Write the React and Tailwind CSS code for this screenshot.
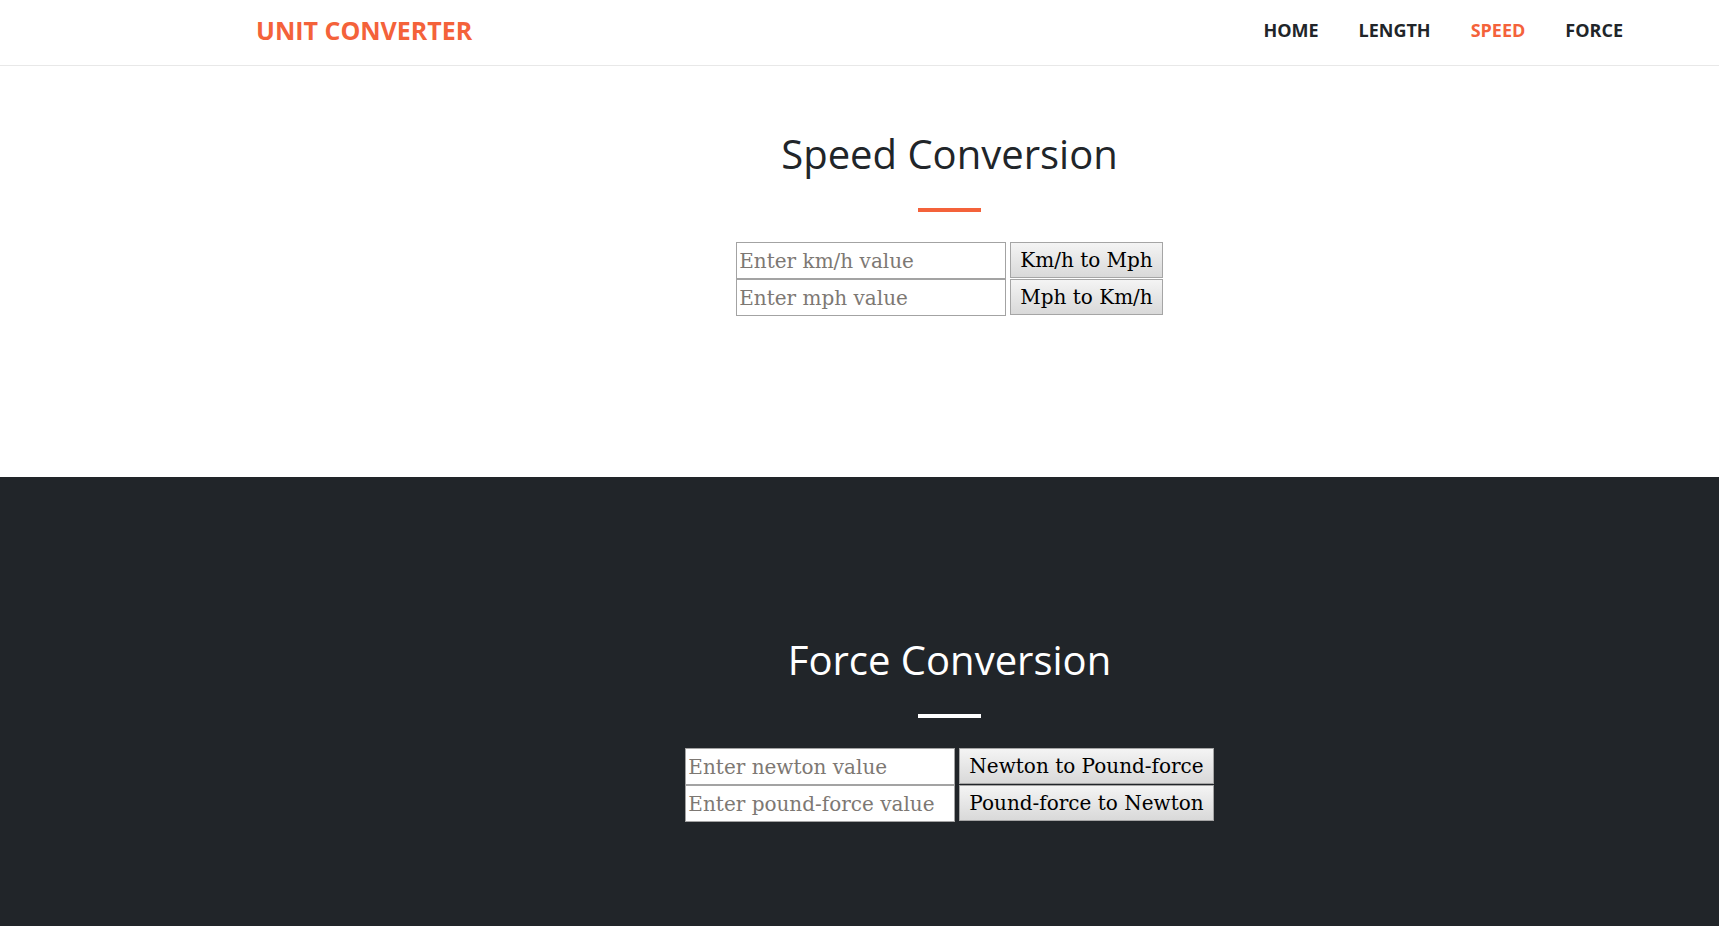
import { useState } from 'react';

function Converter({ rows }) {
    const [values, setValues] = useState(rows.map(() => ''));

    function handleChange(i, v) {
        setValues(prev => prev.map((p, j) => (j == i ? v : p)));
    }

    return <div className="flex flex-col">
        {rows.map((row, i) => (
            <div key={row.button} className="flex flex-row items-start gap-[4px]">
                <input
                    type="text"
                    value={values[i]}
                    onChange={e => handleChange(i, e.target.value)}
                    placeholder={row.placeholder}
                    className="w-[270px] h-[37px] bg-white border border-[#a3a3a3] px-[2px] text-[20px] text-black placeholder:text-[#7d7873] outline-none font-['DejaVu_Serif',serif]"
                />
                <button className="h-[36px] px-[9px] border border-[#a5a5a5] bg-linear-to-b from-[#f4f4f4] to-[#d9d9d9] text-[20px] text-black font-['DejaVu_Serif',serif] whitespace-nowrap">
                    {row.button}
                </button>
            </div>
        ))}
    </div>
}

export default function App() {
    const links = ['HOME', 'LENGTH', 'SPEED', 'FORCE'];

    return <div className="min-h-screen w-full bg-white font-['Open_Sans',sans-serif]">
        <nav className="h-[66px] border-b border-[#e8e8e8] flex flex-row items-center pl-[256px] pr-[96px]">
            <div className="text-[25px] font-bold text-[#f4623a] mr-auto -mt-[4px]">UNIT CONVERTER</div>
            <div className="flex flex-row gap-[40px] -mt-[4px]">
                {links.map(l => (
                    <a key={l} className={`text-[18px] font-bold ${l == 'SPEED' ? 'text-[#f4623a]' : 'text-[#212529]'}`}>{l}</a>
                ))}
            </div>
        </nav>

        <section className="h-[411px] pt-[63px] pl-[180px] flex flex-col items-center">
            <h2 className="text-[40px] leading-[50px] text-[#212529]">Speed Conversion</h2>
            <div className="w-[63px] h-[4px] bg-[#f4623a] mt-[29px] mb-[30px]" />
            <Converter rows={[
                { placeholder: 'Enter km/h value', button: 'Km/h to Mph' },
                { placeholder: 'Enter mph value', button: 'Mph to Km/h' },
            ]} />
        </section>

        <section className="h-[460px] bg-[#212529] pt-[158px] pl-[180px] flex flex-col items-center">
            <h2 className="text-[40px] leading-[50px] text-white">Force Conversion</h2>
            <div className="w-[63px] h-[4px] bg-white mt-[29px] mb-[30px]" />
            <Converter rows={[
                { placeholder: 'Enter newton value', button: 'Newton to Pound-force' },
                { placeholder: 'Enter pound-force value', button: 'Pound-force to Newton' },
            ]} />
        </section>
    </div>
}
